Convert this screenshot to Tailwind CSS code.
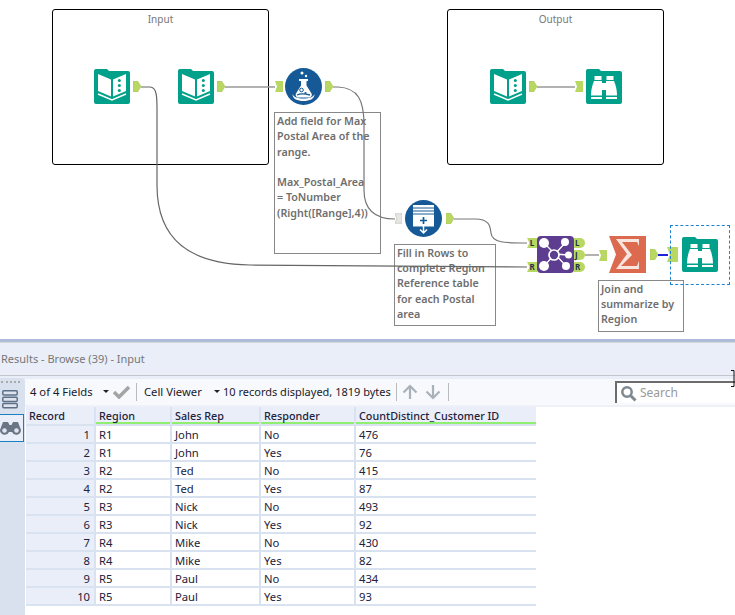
<!DOCTYPE html>
<html><head><meta charset="utf-8"><script src="https://cdn.jsdelivr.net/npm/@tailwindcss/browser@4"></script></head>
<body class="bg-white">
<svg width="0" height="0" class="absolute">
<defs>
<symbol id="book" viewBox="0 0 36 36">
<path d="M0 3a2 2 0 0 1 2-2h11l2 2h19a2 2 0 0 1 2 2v29a2 2 0 0 1-2 2H2a2 2 0 0 1-2-2z" fill="#00a08b"/>
<path d="M4 6l13 5.500v17L4 23zM32 6l-13 5.500v17l13-5.500z" fill="#fff"/>
<path d="M4 26l14 6 14-6" fill="none" stroke="#fff" stroke-width="1.500"/>
<circle cx="25.300" cy="12.500" r="1.500" fill="#00a08b"/><circle cx="25.300" cy="17.500" r="1.500" fill="#00a08b"/><circle cx="25.300" cy="22.500" r="1.500" fill="#00a08b"/>
</symbol>
<symbol id="bino" viewBox="0 0 36 36">
<path d="M0 3a2 2 0 0 1 2-2h11l2 2h19a2 2 0 0 1 2 2v29a2 2 0 0 1-2 2H2a2 2 0 0 1-2-2z" fill="#00a08b"/>
<path d="M8.500 8h7v4h-7zM20.500 8h7v4h-7z" fill="#fff"/>
<path d="M8 13h8v14.500H5c0-5 1-10 3-14.500zM28 13h-8v14.500h11c0-5-1-10-3-14.500z" fill="#fff"/>
<path d="M16 15h4v7h-4z" fill="#fff"/>
<path d="M5 30h11M20 30h11" stroke="#fff" stroke-width="2"/>
</symbol>
<symbol id="outa" viewBox="0 0 8 11"><path d="M0 0h4.500L8 5.500 4.500 11H0z" fill="#b8d863" stroke="#a4c552" stroke-width=".6"/></symbol>
<symbol id="ina" viewBox="0 0 8 11"><path d="M0 0h8v11H0l2-5.500z" fill="#b8d863"/></symbol>
</defs>
</svg>
<div class="w-[735px] h-[615px] overflow-hidden flex flex-col font-['Noto_Sans','Open_Sans',sans-serif] text-[11.250px] text-[#22223a]">
  <!-- Canvas -->
  <div class="relative h-[339px] shrink-0 bg-white">
    <div class="absolute left-[52px] top-[9px] w-[217px] h-[156px] border border-black rounded-[3px] text-center text-[#777] text-[10px] pt-[2px]">Input</div>
    <div class="absolute left-[447px] top-[9px] w-[217px] h-[156px] border border-black rounded-[3px] text-center text-[#777] text-[10px] pt-[2px]">Output</div>

    <div class="absolute left-[274px] top-[112px] w-[107px] h-[142px] border border-[#888] text-[#6e6e6e] font-semibold text-[10.700px] leading-[15.300px] pl-[2px] pt-[1px]">Add field for Max Postal Area of the range.<br><br>Max_Postal_Area<br>= ToNumber (Right([Range],4))</div>
    <div class="absolute left-[394px] top-[244px] w-[102px] h-[82px] border border-[#888] text-[#6e6e6e] font-semibold text-[10.700px] leading-[15.200px] pl-[2px] pt-[1px]">Fill in Rows to complete Region Reference table for each Postal area</div>
    <div class="absolute left-[598px] top-[280px] w-[86px] h-[52px] border border-[#888] text-[#6e6e6e] font-semibold text-[10.700px] leading-[15.200px] pl-[2px] pt-[1px]">Join and summarize by Region</div>

    <svg class="absolute left-0 top-0" width="735" height="339" fill="none">
      <path d="M141 87H150C158 87 157 100 157 120V185C157 240 190 264 250 265L527 267" stroke="#666" stroke-width="1.200"/>
      <path d="M225 87H275" stroke="#999" stroke-width="1.500"/>
      <path d="M333 87H338C358 88 364 100 364 125V190C364 210 375 219 395 219" stroke="#777" stroke-width="1.200"/>
      <path d="M537 87H575" stroke="#999" stroke-width="1.500"/>
      <path d="M454 219H475C491 219 490 228 491 233C492 243 505 243 527 243" stroke="#777" stroke-width="1.200"/>
      <path d="M585 255H599" stroke="#999" stroke-width="1.500"/>
      <path d="M658 255H668" stroke="#2222dd" stroke-width="2"/>
    </svg>

    <svg class="absolute left-[94px] top-[68px]" width="36" height="36"><use href="#book"/></svg>
    <svg class="absolute left-[178px] top-[68px]" width="36" height="36"><use href="#book"/></svg>
    <svg class="absolute left-[490px] top-[68px]" width="36" height="36"><use href="#book"/></svg>
    <svg class="absolute left-[586px] top-[68px]" width="36" height="36"><use href="#bino"/></svg>
    <svg class="absolute left-[682px] top-[236px]" width="36" height="36"><use href="#bino"/></svg>

    <svg class="absolute left-[133px] top-[81px]" width="8" height="11"><use href="#outa"/></svg>
    <svg class="absolute left-[217px] top-[81px]" width="8" height="11"><use href="#outa"/></svg>
    <svg class="absolute left-[529px] top-[81px]" width="8" height="11"><use href="#outa"/></svg>
    <svg class="absolute left-[325px] top-[81px]" width="8" height="11"><use href="#outa"/></svg>
    <svg class="absolute left-[446px] top-[213px]" width="8" height="11"><use href="#outa"/></svg>
    <svg class="absolute left-[650px] top-[249px]" width="8" height="11"><use href="#outa"/></svg>
    <svg class="absolute left-[275px] top-[81px]" width="8" height="11"><use href="#ina"/></svg>
    <svg class="absolute left-[575px] top-[81px]" width="8" height="11"><use href="#ina"/></svg>
    <svg class="absolute left-[599px] top-[250px]" width="8" height="11"><use href="#ina"/></svg>
    <svg class="absolute left-[395px] top-[213px]" width="7" height="11" viewBox="0 0 8 11"><path d="M0 0h8v11H0l2-5.500z" fill="#e6e6e2" stroke="#bbb" stroke-width=".7"/></svg>
    <div class="absolute left-[667px] top-[247px] w-[11px] h-[15px] bg-[#b8d863] [clip-path:polygon(0_0,100%_0,100%_100%,0_100%,25%_50%)]"></div>

    <!-- Flask -->
    <svg class="absolute left-[285px] top-[68px]" width="37" height="37" viewBox="0 0 37 37">
      <circle cx="18.500" cy="18.500" r="18.500" fill="#155a96"/>
      <circle cx="17" cy="5" r="1.500" fill="#fff"/><circle cx="21" cy="8" r="1.200" fill="#fff"/>
      <path d="M14 11h9v2h-1.500v4.500l5 8c1 2-.5 4-2.500 4H13.500c-2 0-3.500-2-2.500-4l5-8V13h-2z" fill="#fff"/>
      <path d="M7.500 26c0 5 5 7 11 7s11-2 11-7c-1 3-5 4.500-11 4.500S8.500 29 7.500 26z" fill="#fff"/>
      <circle cx="16.500" cy="22" r="1.800" fill="none" stroke="#155a96" stroke-width="1"/><circle cx="20.500" cy="25" r="1.100" fill="#155a96"/><path d="M12 27c4-2 9-1 13 0" stroke="#155a96" stroke-width="1.300" fill="none"/>
    </svg>
    <!-- Generate rows -->
    <svg class="absolute left-[405px] top-[200px]" width="37" height="37" viewBox="0 0 37 37">
      <circle cx="18.500" cy="18.500" r="18.500" fill="#155a96"/>
      <path d="M8 5h21v21.500H8z" fill="#fff"/>
      <path d="M8 8h21M8 11h21M8 14h21" stroke="#155a96" stroke-width="1"/>
      <path d="M18.500 17v7M15 20.500h7" stroke="#155a96" stroke-width="1.700"/>
      <path d="M18.500 26v7M15 29.500l3.500 3.500 3.500-3.500" stroke="#fff" stroke-width="1.500" fill="none"/>
    </svg>
    <!-- Join -->
    <svg class="absolute left-[537px] top-[236px]" width="37" height="37" viewBox="0 0 37 37">
      <rect width="37" height="37" rx="4" fill="#5d3d8f"/>
      <path d="M18 18L7 7M18 18L28 7M18 18L31 19M18 18L7 30M18 18L29 30" stroke="#fff" stroke-width="1.300"/>
      <circle cx="7" cy="7" r="5" fill="#fff"/><circle cx="28" cy="6" r="4" fill="#fff"/><circle cx="31.500" cy="19" r="3.500" fill="#fff"/><circle cx="7" cy="30" r="5" fill="#fff"/><circle cx="29" cy="30" r="4" fill="#fff"/>
      <circle cx="17" cy="19" r="5" fill="#5d3d8f" stroke="#fff" stroke-width="1.700"/>
    </svg>
    <div class="absolute left-[527px] top-[238px] w-[10px] h-[10px] bg-[#b8d863] text-[8px] leading-[10px] font-bold text-[#234] text-center [clip-path:polygon(0_0,100%_0,100%_100%,0_100%,25%_50%)]">L</div>
    <div class="absolute left-[527px] top-[262px] w-[10px] h-[10px] bg-[#b8d863] text-[8px] leading-[10px] font-bold text-[#234] text-center [clip-path:polygon(0_0,100%_0,100%_100%,0_100%,25%_50%)]">R</div>
    <div class="absolute left-[574px] top-[238px] w-[11px] h-[10px] bg-[#b8d863] text-[8px] leading-[10px] font-bold text-[#234] pl-[1px] rounded-r-[5px]">L</div>
    <div class="absolute left-[574px] top-[250px] w-[11px] h-[10px] bg-[#b8d863] text-[8px] leading-[10px] font-bold text-[#234] pl-[1px] rounded-r-[5px]">J</div>
    <div class="absolute left-[574px] top-[262px] w-[11px] h-[10px] bg-[#b8d863] text-[8px] leading-[10px] font-bold text-[#234] pl-[1px] rounded-r-[5px]">R</div>
    <!-- Sum -->
    <svg class="absolute left-[609px] top-[236px]" width="37" height="37" viewBox="0 0 37 37">
      <path d="M0 0h37v37H0l7-18.500z" fill="#dc6a4e"/>
      <path d="M7 3h23v7l-2-4H13l10 13-11 11h16l2-5v8H7l11-15z" fill="#f8e6de"/>
    </svg>
    <div class="absolute left-[670px] top-[225px] w-[60px] h-[60px] border border-dashed border-[#1a82d0]"></div>
  </div>

  <!-- Results pane -->
  <div class="h-[4px] shrink-0 bg-[#aebcdb] border-b border-[#d8d8d8]"></div>
  <div class="h-[33px] shrink-0 bg-[#e9eef9] border-b border-[#c4c6cc] flex items-center text-[#777] text-[11px] pl-[1px]">Results - Browse (39) - Input</div>
  <div class="flex-1 flex min-h-0 bg-[#e9eef9] pt-[3px]">
    <div class="w-[25px] shrink-0 bg-[#d9e1ee] rounded-tr-[4px] flex flex-col -mt-[1px]">
      <div class="h-[2px] mt-[3px] mx-[1px] mr-[5px] border-t-2 border-dotted border-[#aaa]"></div>
      <svg class="mt-[7px] ml-[2px]" width="16" height="19" viewBox="0 0 16 19" fill="#dde4f0" stroke="#5d7088" stroke-width="1.500"><rect x=".8" y=".8" width="14.400" height="4.200" rx="1"/><rect x=".8" y="7.200" width="14.400" height="4.200" rx="1"/><rect x=".8" y="13.600" width="14.400" height="4.200" rx="1"/></svg>
      <div class="mt-[5px] h-[28px] w-[24px] bg-[#e9eef9] border border-l-0 border-[#1a7fc1] flex items-center">
        <svg width="21" height="14" viewBox="0 0 21 14"><path d="M3 1h5l1.500 3h2L13 1h5l3 8a4.700 4.700 0 0 1-9 2H9a4.700 4.700 0 0 1-9-2z" fill="#6b7684"/><circle cx="4.500" cy="9.500" r="2.300" fill="#dfe5f1"/><circle cx="16.500" cy="9.500" r="2.300" fill="#dfe5f1"/></svg>
      </div>
    </div>
    <div class="flex-1 min-w-0 bg-white flex flex-col">
      <div class="h-[26px] shrink-0 bg-[#f7f9fd] flex items-center text-[#1a1a2a] pl-[5px] relative">
        <span class="w-[62px] whitespace-nowrap">4 of 4 Fields</span>
        <svg width="6" height="4" class="ml-[11px]"><path d="M0 0h6L3 3z" fill="#222"/></svg>
        <svg width="18" height="14" viewBox="0 0 18 14" class="ml-[4px]"><path d="M1 7l5 5L16 2" fill="none" stroke="#a4a4a4" stroke-width="3.500"/></svg>
        <div class="w-px h-[18px] bg-[#bbb] ml-[5px]"></div>
        <span class="ml-[7px] w-[60px] whitespace-nowrap">Cell Viewer</span>
        <svg width="6" height="4" class="ml-[10px]"><path d="M0 0h6L3 3z" fill="#222"/></svg>
        <span class="ml-[3px] w-[170px] whitespace-nowrap text-[11px]">10 records displayed, 1819 bytes</span>
        <div class="w-px h-[18px] bg-[#bbb] ml-[3px]"></div>
        <svg width="16" height="16" viewBox="0 0 16 16" class="ml-[5px]" fill="none" stroke="#a9b1b9" stroke-width="2.200"><path d="M8 15V2M1.500 8.500L8 2l6.500 6.500"/></svg>
        <svg width="16" height="16" viewBox="0 0 16 16" class="ml-[7px]" fill="none" stroke="#a9b1b9" stroke-width="2.200"><path d="M8 1v13M1.500 7.500L8 14l6.500-6.500"/></svg>
        <div class="w-px h-[18px] bg-[#bbb] ml-[7px]"></div>
        <div class="absolute left-[590px] top-[2px] w-[120px] h-[22px] bg-white border-t-2 border-l-2 border-[#6c6c6c] flex items-center pl-[3px] text-[#999] text-[12px]">
          <svg width="17" height="17" viewBox="0 0 17 17" fill="none" stroke="#808890" stroke-width="2.500"><circle cx="7" cy="7" r="4.700"/><path d="M10.500 10.500L15.500 15.500" stroke-width="3"/></svg>
          <span class="ml-[3px]">Search</span>
        </div>
      </div>
      <div class="h-[2px] shrink-0 bg-[#eef1f7]"></div>
      <div class="grid grid-cols-[68px_74px_87px_93px_180px] grid-rows-[17px] auto-rows-[16px] gap-[2px] w-[510px] ml-[1px] bg-[#d8e2f0] border-b-2 border-[#d8e2f0] leading-[17px]">
        <div class="bg-[#e9eef9] font-medium text-[10.800px] pl-[3px]">Record</div>
        <div class="bg-[#e9eef9] font-medium text-[10.800px] pl-[3px] border-b-2 border-[#90ee70]">Region</div>
        <div class="bg-[#e9eef9] font-medium text-[10.800px] pl-[3px] border-b-2 border-[#90ee70]">Sales Rep</div>
        <div class="bg-[#e9eef9] font-medium text-[10.800px] pl-[3px] border-b-2 border-[#90ee70]">Responder</div>
        <div class="bg-[#e9eef9] font-medium text-[10.800px] pl-[3px] border-b-2 border-[#90ee70]">CountDistinct_Customer ID</div>

        <div class="bg-[#e9eef9] text-right pr-[4px]">1</div><div class="bg-white pl-[3px]">R1</div><div class="bg-white pl-[3px]">John</div><div class="bg-white pl-[3px]">No</div><div class="bg-white pl-[3px]">476</div>
        <div class="bg-[#e9eef9] text-right pr-[4px]">2</div><div class="bg-white pl-[3px]">R1</div><div class="bg-white pl-[3px]">John</div><div class="bg-white pl-[3px]">Yes</div><div class="bg-white pl-[3px]">76</div>
        <div class="bg-[#e9eef9] text-right pr-[4px]">3</div><div class="bg-white pl-[3px]">R2</div><div class="bg-white pl-[3px]">Ted</div><div class="bg-white pl-[3px]">No</div><div class="bg-white pl-[3px]">415</div>
        <div class="bg-[#e9eef9] text-right pr-[4px]">4</div><div class="bg-white pl-[3px]">R2</div><div class="bg-white pl-[3px]">Ted</div><div class="bg-white pl-[3px]">Yes</div><div class="bg-white pl-[3px]">87</div>
        <div class="bg-[#e9eef9] text-right pr-[4px]">5</div><div class="bg-white pl-[3px]">R3</div><div class="bg-white pl-[3px]">Nick</div><div class="bg-white pl-[3px]">No</div><div class="bg-white pl-[3px]">493</div>
        <div class="bg-[#e9eef9] text-right pr-[4px]">6</div><div class="bg-white pl-[3px]">R3</div><div class="bg-white pl-[3px]">Nick</div><div class="bg-white pl-[3px]">Yes</div><div class="bg-white pl-[3px]">92</div>
        <div class="bg-[#e9eef9] text-right pr-[4px]">7</div><div class="bg-white pl-[3px]">R4</div><div class="bg-white pl-[3px]">Mike</div><div class="bg-white pl-[3px]">No</div><div class="bg-white pl-[3px]">430</div>
        <div class="bg-[#e9eef9] text-right pr-[4px]">8</div><div class="bg-white pl-[3px]">R4</div><div class="bg-white pl-[3px]">Mike</div><div class="bg-white pl-[3px]">Yes</div><div class="bg-white pl-[3px]">82</div>
        <div class="bg-[#e9eef9] text-right pr-[4px]">9</div><div class="bg-white pl-[3px]">R5</div><div class="bg-white pl-[3px]">Paul</div><div class="bg-white pl-[3px]">No</div><div class="bg-white pl-[3px]">434</div>
        <div class="bg-[#e9eef9] text-right pr-[4px]">10</div><div class="bg-white pl-[3px]">R5</div><div class="bg-white pl-[3px]">Paul</div><div class="bg-white pl-[3px]">Yes</div><div class="bg-white pl-[3px]">93</div>
      </div>
    </div>
  </div>
  <svg class="absolute left-[731px] top-[370px]" width="4" height="17" viewBox="0 0 4 17" fill="none" stroke="#111"><path d="M0 .5h3v16H0"/></svg>
</div>
</body></html>
